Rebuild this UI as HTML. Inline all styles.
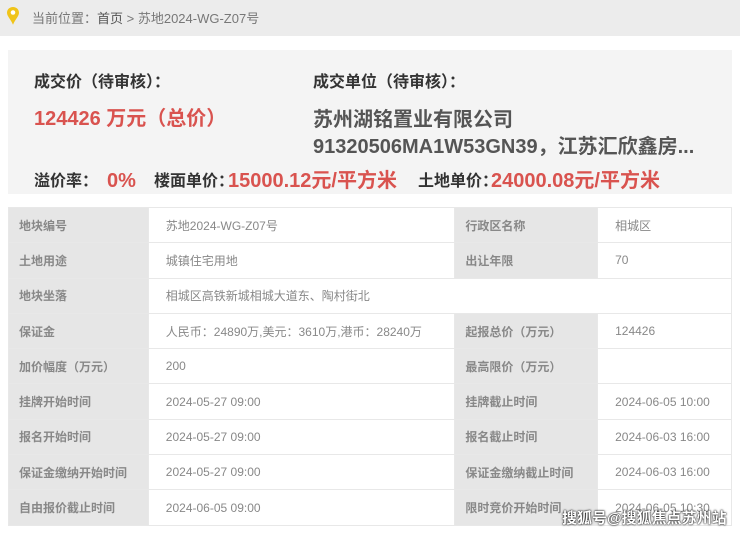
<!DOCTYPE html>
<html><head><meta charset="utf-8"><style>
*{margin:0;padding:0;box-sizing:border-box}
body{width:740px;height:533px;background:#fff;font-family:"Liberation Sans","Noto Sans CJK SC",sans-serif;position:relative;overflow:hidden;color:#333}
.top{position:absolute;left:0;top:0;width:740px;height:36px;background:#ececec}
.top .t{position:absolute;left:32px;top:8px;font-size:13px;color:#777}
.top .t b{font-weight:normal;color:#555}
.card{position:absolute;left:8px;top:50px;width:724px;height:144px;background:#f4f4f4}
.a{position:absolute;font-weight:bold;white-space:nowrap}
.red{color:#d9534f}
.s{font-size:16px;color:#333;top:121px;line-height:22px}
.b{font-size:20px;color:#d9534f;top:119px;line-height:24px}
table{position:absolute;left:8px;top:207px;width:724px;border-collapse:collapse;font-size:12px}
td{height:35.3px;border:1px solid #e8e8e8;padding-left:17px;color:#888}
td.l{background:#e6e6e6;color:#888;font-weight:bold;padding-left:10px}
.wm{position:absolute;left:562px;top:507px;font-size:15px;color:#fff;font-weight:bold;text-shadow:0 0 2px #000,0 0 1px #000}
</style></head><body>
<div class="top">
<svg style="position:absolute;left:6px;top:6px" width="14" height="20" viewBox="0 0 14 20"><path d="M7 1C3.5 1 1 3.5 1 6.8c0 3.5 3.5 6 6 12 2.5-6 6-8.5 6-12C13 3.5 10.5 1 7 1z" fill="#f0c419"/><circle cx="7" cy="6.5" r="2.3" fill="#fff"/></svg>
<div class="t">当前位置：<b>首页</b> &gt; 苏地2024-WG-Z07号</div>
</div>
<div class="card">
<div class="a" style="left:26px;top:18px;font-size:16px;color:#333">成交价（待审核）：</div>
<div class="a red" style="left:26px;top:52px;font-size:20px">124426 万元（总价）</div>
<div class="a" style="left:305px;top:18px;font-size:16px;color:#333">成交单位（待审核）：</div>
<div class="a" style="left:305px;top:53px;font-size:20px;color:#555">苏州湖铭置业有限公司</div>
<div class="a" style="left:305px;top:80px;font-size:20px;color:#555">91320506MA1W53GN39，江苏汇欣鑫房...</div>
<div class="a s" style="left:26px">溢价率：</div>
<div class="a b" style="left:99px">0%</div>
<div class="a s" style="left:146px">楼面单价：</div>
<div class="a b" style="left:220px">15000.12元/平方米</div>
<div class="a s" style="left:410px">土地单价：</div>
<div class="a b" style="left:483px">24000.08元/平方米</div>
</div>
<table>
<colgroup><col style="width:140px"><col style="width:307px"><col style="width:143px"><col style="width:134px"></colgroup>
<tr><td class="l">地块编号</td><td>苏地2024-WG-Z07号</td><td class="l">行政区名称</td><td>相城区</td></tr>
<tr><td class="l">土地用途</td><td>城镇住宅用地</td><td class="l">出让年限</td><td>70</td></tr>
<tr><td class="l">地块坐落</td><td colspan="3" style="background:#fff">相城区高铁新城相城大道东、陶村街北</td></tr>
<tr><td class="l">保证金</td><td>人民币：24890万,美元：3610万,港币：28240万</td><td class="l">起报总价（万元）</td><td>124426</td></tr>
<tr><td class="l">加价幅度（万元）</td><td>200</td><td class="l">最高限价（万元）</td><td></td></tr>
<tr><td class="l">挂牌开始时间</td><td>2024-05-27 09:00</td><td class="l">挂牌截止时间</td><td>2024-06-05 10:00</td></tr>
<tr><td class="l">报名开始时间</td><td>2024-05-27 09:00</td><td class="l">报名截止时间</td><td>2024-06-03 16:00</td></tr>
<tr><td class="l">保证金缴纳开始时间</td><td>2024-05-27 09:00</td><td class="l">保证金缴纳截止时间</td><td>2024-06-03 16:00</td></tr>
<tr><td class="l">自由报价截止时间</td><td>2024-06-05 09:00</td><td class="l">限时竞价开始时间</td><td>2024-06-05 10:30</td></tr>
</table>
<div class="wm">搜狐号@搜狐焦点苏州站</div>
</body></html>
